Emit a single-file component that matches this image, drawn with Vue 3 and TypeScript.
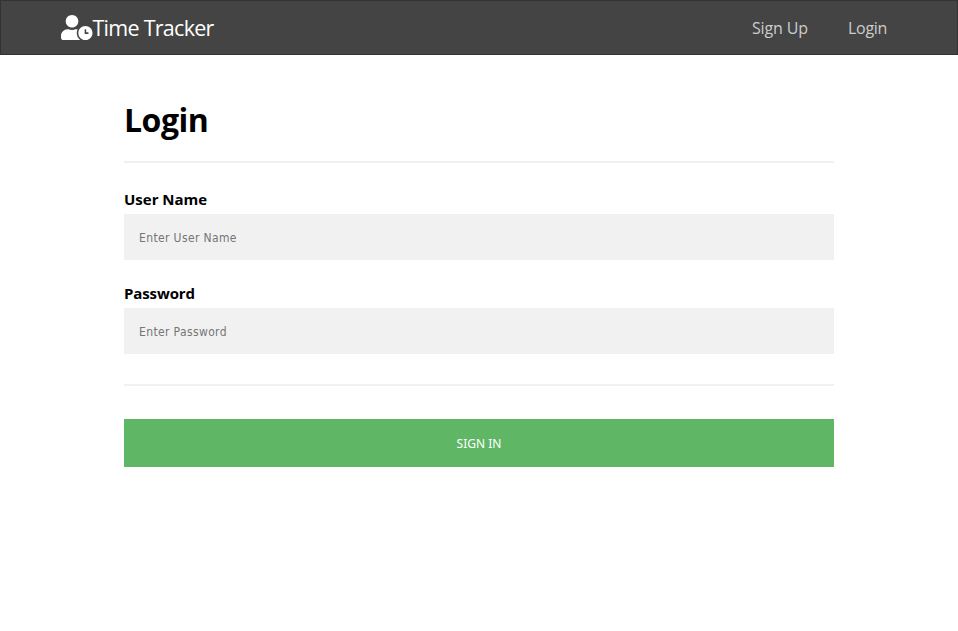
<script setup lang="ts">
import { ref } from 'vue'

const userName = ref<string>('')
const password = ref<string>('')
</script>

<template>
  <div class="page">
    <header class="navbar">
      <a class="brand">
        <svg class="brand-icon" viewBox="0 0 640 512" aria-hidden="true">
          <path fill="currentColor" d="M496 224c-79.6 0-144 64.4-144 144s64.4 144 144 144 144-64.4 144-144-64.4-144-144-144zm64 150.3c0 5.3-4.4 9.7-9.7 9.7h-60.6c-5.3 0-9.7-4.4-9.7-9.7v-76.6c0-5.3 4.4-9.7 9.7-9.7h12.6c5.3 0 9.7 4.4 9.7 9.7V352h38.3c5.3 0 9.7 4.4 9.7 9.7v12.6zM320 368c0-27.8 6.7-54.1 18.2-77.5-8-1.5-16.2-2.5-24.6-2.5h-16.7c-22.2 10.2-46.9 16-72.9 16s-50.6-5.8-72.9-16h-16.7C60.2 288 0 348.2 0 422.4V464c0 26.5 21.5 48 48 48h347.1c-45.3-31.9-75.1-84.5-75.1-144zm-96-112c70.7 0 128-57.3 128-128S294.7 0 224 0 96 57.3 96 128s57.3 128 128 128z" />
        </svg>
        <span class="brand-name">Time Tracker</span>
      </a>
      <nav class="links">
        <a class="signup">Sign Up</a>
        <a class="login">Login</a>
      </nav>
    </header>
    <form class="form" @submit.prevent>
      <h1>Login</h1>
      <hr />
      <label for="user">User Name</label>
      <input id="user" v-model="userName" type="text" placeholder="Enter User Name" />
      <label for="pass" class="pass-label">Password</label>
      <input id="pass" v-model="password" class="password" type="password" placeholder="Enter Password" />
      <hr />
      <button type="submit">SIGN IN</button>
    </form>
  </div>
</template>

<style>
body {
  background: #fff;
}
</style>

<style scoped>
.page {
  min-height: 631px;
  font-family: "Open Sans", "Noto Sans", sans-serif;
  color: #000;
}
.navbar {
  box-sizing: border-box;
  height: 55px;
  padding: 0 70px 0 60px;
  display: flex;
  align-items: center;
  justify-content: space-between;
  background: #444;
  border: 1px solid #333;
}
.brand {
  display: flex;
  align-items: center;
  color: #fff;
}
.brand-icon {
  width: 31.5px;
  height: 25.2px;
}
.brand-name {
  font-size: 21.5px;
  line-height: 30px;
  letter-spacing: -0.73px;
  white-space: nowrap;
}
.links {
  display: flex;
  gap: 40px;
  padding-top: 1px;
  font-size: 16px;
  line-height: 22px;
  color: #ccc;
}
.signup {
  width: 56px;
  letter-spacing: -0.15px;
  white-space: nowrap;
}
.login {
  width: 39px;
  letter-spacing: -0.3px;
}
.form {
  width: 710px;
  margin: 0 auto;
  padding-top: 43px;
  display: flex;
  flex-direction: column;
}
h1 {
  margin: 0 0 20px;
  font-size: 32px;
  line-height: 43px;
  font-weight: 700;
  letter-spacing: -0.5px;
}
hr {
  width: 100%;
  height: 2px;
  margin: 0 0 25px;
  border: 0;
  background: #f1f1f1;
}
label {
  height: 26px;
  font-size: 15px;
  line-height: 23px;
  font-weight: 700;
}
.pass-label {
  letter-spacing: -0.12px;
}
input {
  box-sizing: border-box;
  width: 100%;
  height: 46px;
  margin: 0 0 22px;
  padding: 1px 15px 0;
  border: 0;
  border-radius: 0;
  outline: 0;
  background: #f1f1f1;
  font: 12px "DejaVu Sans Condensed", "DejaVu Sans", sans-serif;
  letter-spacing: 0.37px;
}
input::placeholder {
  color: #757575;
}
.password {
  margin-bottom: 30px;
}
button {
  height: 48px;
  margin-top: 8px;
  padding: 0;
  border: 0;
  background: #5fb765;
  color: #fff;
  font: 12px "Noto Sans", sans-serif;
}
</style>
